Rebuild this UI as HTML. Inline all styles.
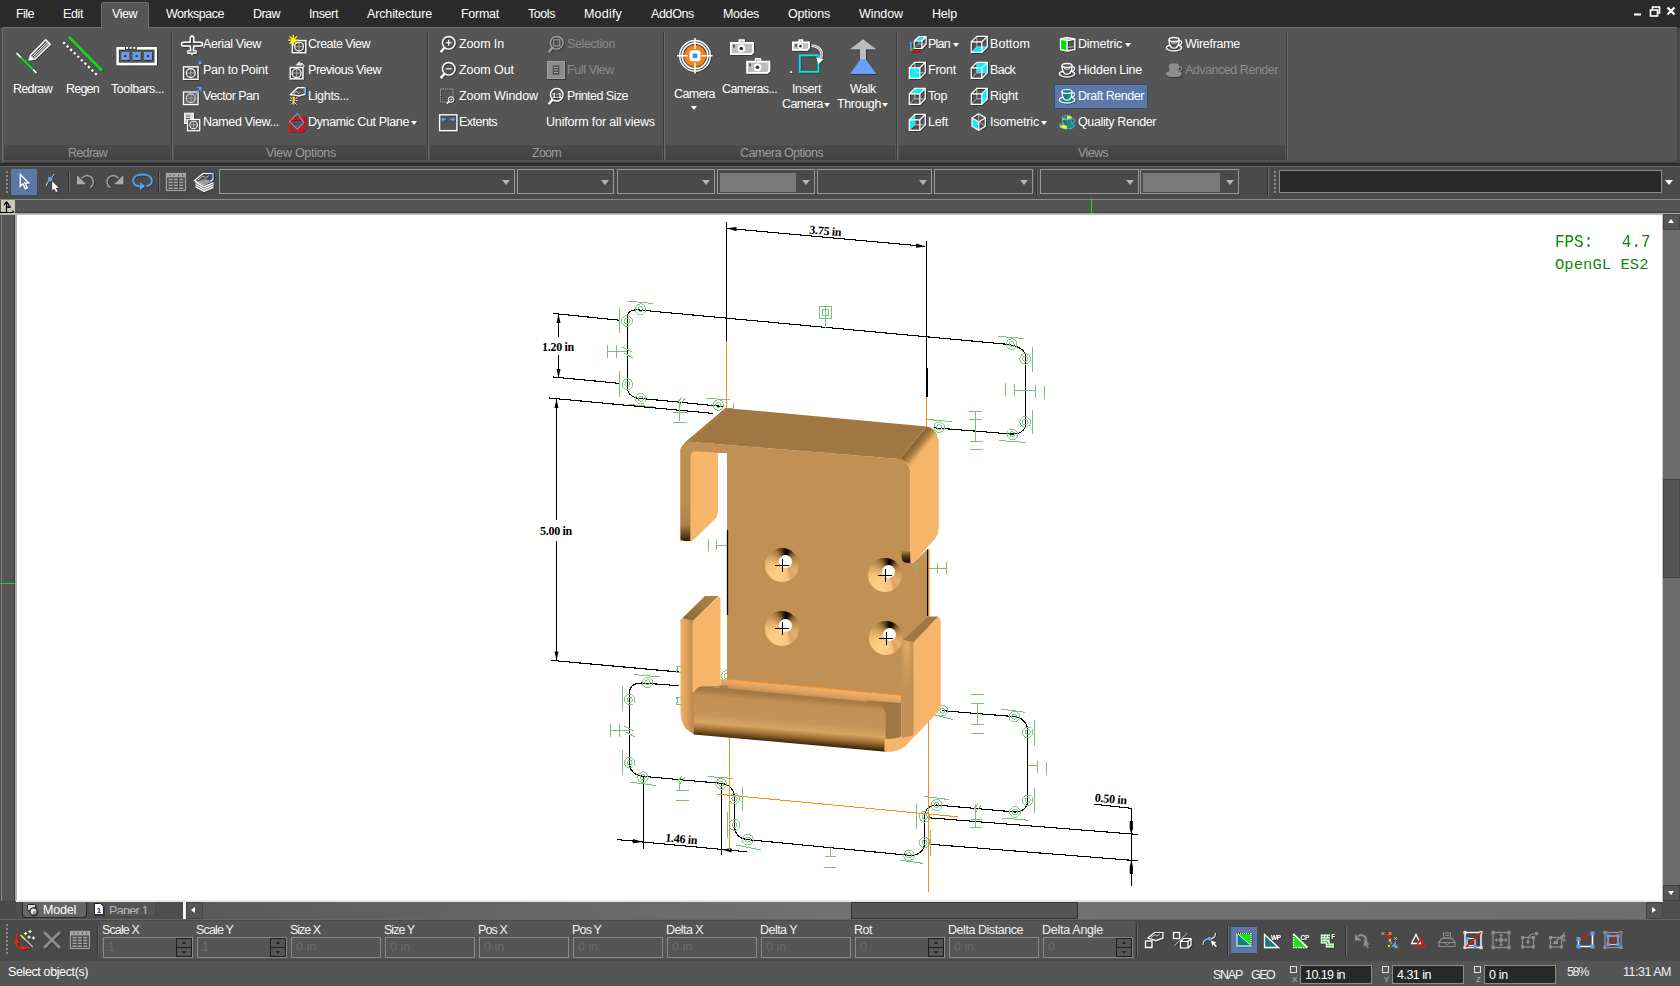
<!DOCTYPE html>
<html><head><meta charset="utf-8">
<style>
*{box-sizing:border-box;margin:0;padding:0}
html,body{width:1680px;height:986px;overflow:hidden;background:#4a4a4a;font-family:"Liberation Sans",sans-serif;font-size:12px;color:#fff}
.abs{position:absolute}
#menubar{left:0;top:0;width:1680px;height:28px;background:#2b2b2b}
.t{position:absolute;white-space:nowrap;line-height:1.15}
#viewtab{left:101px;top:2px;width:48px;height:27px;background:#555;border:1px solid #727272;border-bottom:none;border-radius:3px 3px 0 0}
#ribbon{left:2px;top:27px;width:1676px;height:136px;background:#555;border:1px solid #6e6e6e;border-bottom-color:#3a3a3a;border-right-color:#444;border-radius:2px}
.grp{position:absolute;top:145px;height:15px;background:linear-gradient(#4b4b4b,#424242);color:#9a9a9a;font-size:12px;text-align:center;line-height:15px}
.gsep{position:absolute;top:32px;height:128px;width:2px;background:linear-gradient(90deg,#3a3a3a 50%,#6c6c6c 50%)}
.rt{position:absolute;font-size:12.5px;white-space:nowrap;color:#fff;letter-spacing:-0.15px}
.dis{color:#8e8e8e}
.ic{position:absolute}
#tb{left:0;top:166px;width:1680px;height:32px;background:#4a4a4a;border-top:1px solid #6a6a6a}
.combo{position:absolute;top:169px;height:25px;border:1px solid #9a9a9a;background:#4a4a4a}
.combo:after{content:"";position:absolute;right:4px;top:10px;border:4px solid transparent;border-top:5px solid #b4b4b4;border-bottom:none}
.combo.g:before{content:"";position:absolute;left:2px;top:3px;bottom:1px;right:18px;background:#7a7a7a}
#rulerrow{left:0;top:199px;width:1680px;height:16px;background:#555;border-top:1px solid #8a8a8a;border-bottom:2px solid #b4b4b4}#rulerrow:after{content:"";position:absolute;left:0;right:0;bottom:0;height:1px;background:#3c3c3c}
#canvas{left:16px;top:215px;width:1647px;height:686px;background:#fff}
#vsb{left:1663px;top:215px;width:17px;height:686px;background:#6c6c6c}
#tabrow{left:0;top:901px;width:1680px;height:18px;background:#6a6a6a}
#insp{left:0;top:919px;width:1680px;height:42px;background:#4a4a4a;border-top:1px solid #666}
#status{left:0;top:961px;width:1680px;height:25px;background:#555}
.fl{position:absolute;top:923px;font-size:12.5px;color:#f0f0f0;white-space:nowrap;letter-spacing:-0.15px}
.fb{position:absolute;top:937px;height:21px;border:1px solid #8a8a8a;background:#555;color:#6c6c6c;font-size:12.5px;line-height:18px;padding-left:4px}
</style></head><body>
<div id="menubar" class="abs"></div>
<div id="ribbon" class="abs"></div>
<div id="viewtab" class="abs"></div>
<div class="t" style="left:16.0px;top:6.6px;font-size:12.5px;letter-spacing:-0.54px;color:#fff;">File</div><div class="t" style="left:63.0px;top:6.6px;font-size:12.5px;letter-spacing:-0.38px;color:#fff;">Edit</div><div class="t" style="left:112.0px;top:6.6px;font-size:12.5px;letter-spacing:-0.47px;color:#fff;">View</div><div class="t" style="left:166.0px;top:6.6px;font-size:12.5px;letter-spacing:-0.48px;color:#fff;">Workspace</div><div class="t" style="left:253.0px;top:6.6px;font-size:12.5px;letter-spacing:-0.54px;color:#fff;">Draw</div><div class="t" style="left:309.0px;top:6.6px;font-size:12.5px;letter-spacing:-0.38px;color:#fff;">Insert</div><div class="t" style="left:367.0px;top:6.6px;font-size:12.5px;letter-spacing:-0.14px;color:#fff;">Architecture</div><div class="t" style="left:461.0px;top:6.6px;font-size:12.5px;letter-spacing:-0.27px;color:#fff;">Format</div><div class="t" style="left:528.0px;top:6.6px;font-size:12.5px;letter-spacing:-0.44px;color:#fff;">Tools</div><div class="t" style="left:584.0px;top:6.6px;font-size:12.5px;letter-spacing:0.20px;color:#fff;">Modify</div><div class="t" style="left:651.0px;top:6.6px;font-size:12.5px;letter-spacing:-0.36px;color:#fff;">AddOns</div><div class="t" style="left:723.0px;top:6.6px;font-size:12.5px;letter-spacing:-0.30px;color:#fff;">Modes</div><div class="t" style="left:788.0px;top:6.6px;font-size:12.5px;letter-spacing:-0.15px;color:#fff;">Options</div><div class="t" style="left:859.0px;top:6.6px;font-size:12.5px;letter-spacing:-0.08px;color:#fff;">Window</div><div class="t" style="left:932.0px;top:6.6px;font-size:12.5px;letter-spacing:-0.18px;color:#fff;">Help</div><svg class="abs" style="left:1630px;top:4px" width="50" height="18" viewBox="0 0 50 18">
<rect x="4" y="9.5" width="7" height="2" fill="#fff"/>
<rect x="22.5" y="3" width="7" height="6" fill="none" stroke="#fff" stroke-width="1.6"/><rect x="20.5" y="6" width="7" height="6" fill="#2b2b2b" stroke="#fff" stroke-width="1.6"/>
<path d="M37.5 3.5l7 7M44.5 3.5l-7 7" stroke="#fff" stroke-width="2.2"/></svg>
<div class="grp" style="left:4px;width:166px"></div><div class="t" style="left:68.0px;top:146.2px;font-size:12.5px;letter-spacing:-0.68px;color:#9c9c9c;">Redraw</div><div class="grp" style="left:174px;width:252px"></div><div class="t" style="left:266.0px;top:146.2px;font-size:12.5px;letter-spacing:-0.29px;color:#9c9c9c;">View Options</div><div class="grp" style="left:430px;width:232px"></div><div class="t" style="left:532.0px;top:146.2px;font-size:12.5px;letter-spacing:-0.74px;color:#9c9c9c;">Zoom</div><div class="grp" style="left:666px;width:229px"></div><div class="t" style="left:740.0px;top:146.2px;font-size:12.5px;letter-spacing:-0.57px;color:#9c9c9c;">Camera Options</div><div class="grp" style="left:899px;width:386px"></div><div class="t" style="left:1078.0px;top:146.2px;font-size:12.5px;letter-spacing:-0.62px;color:#9c9c9c;">Views</div><div class="gsep" style="left:171px"></div><div class="gsep" style="left:427px"></div><div class="gsep" style="left:663px"></div><div class="gsep" style="left:896px"></div><div class="gsep" style="left:1286px"></div><div class="abs" style="left:1053.5px;top:83.5px;width:94px;height:25px;background:#5b78a8;border:1px solid #3a4d72"></div><div class="t" style="left:13.0px;top:81.5px;font-size:12.5px;letter-spacing:-0.68px;color:#fff;">Redraw</div><div class="t" style="left:66.0px;top:81.5px;font-size:12.5px;letter-spacing:-0.77px;color:#fff;">Regen</div><div class="t" style="left:111.0px;top:81.5px;font-size:12.5px;letter-spacing:-0.42px;color:#fff;">Toolbars...</div><div class="t" style="left:203.0px;top:37.1px;font-size:12.5px;letter-spacing:-0.39px;color:#fff;">Aerial View</div><div class="t" style="left:203.0px;top:63.2px;font-size:12.5px;letter-spacing:-0.26px;color:#fff;">Pan to Point</div><div class="t" style="left:203.0px;top:89.2px;font-size:12.5px;letter-spacing:-0.52px;color:#fff;">Vector Pan</div><div class="t" style="left:203.0px;top:115.2px;font-size:12.5px;letter-spacing:-0.34px;color:#fff;">Named View...</div><div class="t" style="left:308.0px;top:37.1px;font-size:12.5px;letter-spacing:-0.53px;color:#fff;">Create View</div><div class="t" style="left:308.0px;top:63.2px;font-size:12.5px;letter-spacing:-0.46px;color:#fff;">Previous View</div><div class="t" style="left:308.0px;top:89.2px;font-size:12.5px;letter-spacing:-0.31px;color:#fff;">Lights...</div><div class="t" style="left:308.0px;top:115.2px;font-size:12.5px;letter-spacing:-0.35px;color:#fff;">Dynamic Cut Plane</div><div class="t" style="left:459.0px;top:37.1px;font-size:12.5px;letter-spacing:-0.12px;color:#fff;">Zoom In</div><div class="t" style="left:459.0px;top:63.2px;font-size:12.5px;letter-spacing:-0.07px;color:#fff;">Zoom Out</div><div class="t" style="left:459.0px;top:89.2px;font-size:12.5px;letter-spacing:-0.08px;color:#fff;">Zoom Window</div><div class="t" style="left:459.0px;top:115.2px;font-size:12.5px;letter-spacing:-0.53px;color:#fff;">Extents</div><div class="t" style="left:567.0px;top:89.2px;font-size:12.5px;letter-spacing:-0.53px;color:#fff;">Printed Size</div><div class="t" style="left:546.0px;top:115.2px;font-size:12.5px;letter-spacing:-0.17px;color:#fff;">Uniform for all views</div><div class="t" style="left:674.0px;top:86.5px;font-size:12.5px;letter-spacing:-0.58px;color:#fff;">Camera</div><div class="t" style="left:722.0px;top:81.5px;font-size:12.5px;letter-spacing:-0.61px;color:#fff;">Cameras...</div><div class="t" style="left:792.0px;top:81.5px;font-size:12.5px;letter-spacing:-0.38px;color:#fff;">Insert</div><div class="t" style="left:782.0px;top:96.5px;font-size:12.5px;letter-spacing:-0.58px;color:#fff;">Camera</div><div class="t" style="left:850.0px;top:81.5px;font-size:12.5px;letter-spacing:-0.33px;color:#fff;">Walk</div><div class="t" style="left:837.0px;top:96.5px;font-size:12.5px;letter-spacing:-0.37px;color:#fff;">Through</div><div class="t" style="left:928.0px;top:37.1px;font-size:12.5px;letter-spacing:-0.75px;color:#fff;">Plan</div><div class="t" style="left:928.0px;top:63.2px;font-size:12.5px;letter-spacing:-0.24px;color:#fff;">Front</div><div class="t" style="left:928.0px;top:89.2px;font-size:12.5px;letter-spacing:-0.39px;color:#fff;">Top</div><div class="t" style="left:928.0px;top:115.2px;font-size:12.5px;letter-spacing:-0.21px;color:#fff;">Left</div><div class="t" style="left:990.0px;top:37.1px;font-size:12.5px;letter-spacing:0.07px;color:#fff;">Bottom</div><div class="t" style="left:990.0px;top:63.2px;font-size:12.5px;letter-spacing:-0.70px;color:#fff;">Back</div><div class="t" style="left:990.0px;top:89.2px;font-size:12.5px;letter-spacing:-0.24px;color:#fff;">Right</div><div class="t" style="left:990.0px;top:115.2px;font-size:12.5px;letter-spacing:-0.19px;color:#fff;">Isometric</div><div class="t" style="left:1078.0px;top:37.1px;font-size:12.5px;letter-spacing:-0.23px;color:#fff;">Dimetric</div><div class="t" style="left:1078.0px;top:63.2px;font-size:12.5px;letter-spacing:-0.25px;color:#fff;">Hidden Line</div><div class="t" style="left:1078.0px;top:89.2px;font-size:12.5px;letter-spacing:-0.46px;color:#fff;">Draft Render</div><div class="t" style="left:1078.0px;top:115.2px;font-size:12.5px;letter-spacing:-0.38px;color:#fff;">Quality Render</div><div class="t" style="left:1185.0px;top:37.1px;font-size:12.5px;letter-spacing:-0.29px;color:#fff;">Wireframe</div><div class="t" style="left:567.0px;top:37.1px;font-size:12.5px;letter-spacing:-0.38px;color:#8c8c8c;">Selection</div><div class="t" style="left:567.0px;top:63.2px;font-size:12.5px;letter-spacing:-0.39px;color:#8c8c8c;">Full View</div><div class="t" style="left:1185.0px;top:63.2px;font-size:12.5px;letter-spacing:-0.47px;color:#8c8c8c;">Advanced Render</div><div class="abs" style="left:410.5px;top:121.0px;border:3.5px solid transparent;border-top:4px solid #fff;border-bottom:none"></div><div class="abs" style="left:690.5px;top:106.0px;border:3.5px solid transparent;border-top:4px solid #fff;border-bottom:none"></div><div class="abs" style="left:823.5px;top:103.0px;border:3.5px solid transparent;border-top:4px solid #fff;border-bottom:none"></div><div class="abs" style="left:881.5px;top:103.0px;border:3.5px solid transparent;border-top:4px solid #fff;border-bottom:none"></div><div class="abs" style="left:952.5px;top:43.0px;border:3.5px solid transparent;border-top:4px solid #fff;border-bottom:none"></div><div class="abs" style="left:1040.5px;top:121.0px;border:3.5px solid transparent;border-top:4px solid #fff;border-bottom:none"></div><div class="abs" style="left:1124.5px;top:43.0px;border:3.5px solid transparent;border-top:4px solid #fff;border-bottom:none"></div><svg class="abs" style="left:0;top:0" width="1680" height="166" viewBox="0 0 1680 166" fill="none" stroke-linecap="butt"><defs><filter id="sh" x="-20%" y="-20%" width="150%" height="150%"><feDropShadow dx="0.7" dy="0.7" stdDeviation="0.5" flood-color="#000" flood-opacity="0.55"/></filter></defs><g filter="url(#sh)"><path d="M16.5 53L21 57.5M33 69.5L36.5 72.8" stroke="#fff" stroke-width="1.6"/><path d="M21 57.5L33 69.5" stroke="#10e010" stroke-width="2"/><path d="M29.3 59.8L30.6 55.2L45.8 39.8L50.2 44.2L35 59.2Z" stroke="#fff" stroke-width="1.4" fill="none"/><path d="M32.6 56.3L47.6 41.6M33.6 57.8L48.6 43" stroke="#fff" stroke-width="1"/><path d="M29.3 59.8L30.4 55.6L34.4 59Z" fill="#fff"/><path d="M69 36.8L102 70.6" stroke="#10e010" stroke-width="2.6"/><path d="M63.2 42.2L97 75" stroke="#fff" stroke-width="2.2" stroke-dasharray="2.2 2.75"/><path d="M125 48.2H117.6V64H155.8V48.2H137" stroke="#fff" stroke-width="2.4"/><path d="M126 47.8H136" stroke="#fff" stroke-width="1.8" stroke-dasharray="2 1.6"/><rect x="121.3" y="52" width="8" height="8" fill="#6a9cec"/><rect x="124.3" y="55" width="2" height="2" fill="#333"/><rect x="132.6" y="52" width="8" height="8" fill="#6a9cec"/><rect x="135.6" y="55" width="2" height="2" fill="#333"/><rect x="144" y="52" width="8" height="8" fill="#6a9cec"/><rect x="147" y="55" width="2" height="2" fill="#333"/><path d="M192 36c1.2 0 1.8 1 1.8 2.4v3.8h6.4c1.6 0 2.4 .8 2.4 1.9s-.8 1.9-2.4 1.9h-6.4l-.5 4.6h1.6c1 0 1.5 .6 1.5 1.3s-.5 1.3-1.5 1.3h-2l-.9 1.2l-.9-1.2h-2c-1 0-1.5-.6-1.5-1.3s.5-1.3 1.5-1.3h1.600l-.5-4.600h-6.400c-1.600 0-2.400-.8-2.400-1.900s.8-1.900 2.400-1.900h6.400v-3.800c0-1.400.6-2.400 1.800-2.400z" stroke="#fff" stroke-width="1.4"/><rect x="183.5" y="66.8" width="14.5" height="12.5" stroke="#fff" stroke-width="1.3"/><circle cx="190.75" cy="73.05" r="4.4" stroke="#fff" stroke-width="1.1"/><path d="M190.75 69.05V77.05M186.75 73.05H194.75" stroke="#b8b8b8" stroke-width="0.8"/><path d="M200 60.7l2 2.200l-2 2.200l-2-2.200z" fill="#6a9cec"/><rect x="183.5" y="92" width="14.5" height="12.5" stroke="#fff" stroke-width="1.3"/><circle cx="190.75" cy="98.25" r="4.4" stroke="#fff" stroke-width="1.1"/><path d="M190.75 94.25V102.25M186.75 98.25H194.75" stroke="#b8b8b8" stroke-width="0.8"/><rect x="184" y="92.5" width="13.500" height="11.500" fill="#888" opacity=".35"/><path d="M194 97L200.500 88M196.800 87.700l4.200-.4l-.3 4.200" stroke="#6a9cec" stroke-width="1.2"/><rect x="184.500" y="113.200" width="9" height="10.300" fill="#ddd" stroke="#fff" stroke-width="1"/><path d="M186 116h4M186 118.500h4M186 121h4" stroke="#555" stroke-width="1"/><rect x="187.500" y="119.500" width="12.200" height="11.200" fill="#555" stroke="#fff" stroke-width="1.2"/><circle cx="193.600" cy="125" r="3.900" stroke="#fff" stroke-width="1"/><path d="M193.600 121.500v7M190 125h7" stroke="#b8b8b8" stroke-width=".8"/><rect x="184.500" y="113.200" width="6" height="7" fill="#ddd"/><path d="M186 116h4M186 118.500h4" stroke="#555" stroke-width="1"/><rect x="292.3" y="40.5" width="13.5" height="12.2" stroke="#fff" stroke-width="1.3"/><circle cx="299.05" cy="46.6" r="4.4" stroke="#fff" stroke-width="1.1"/><path d="M299.05 42.6V50.6M295.05 46.6H303.05" stroke="#b8b8b8" stroke-width="0.8"/><path d="M293.300 34.800v10.600M288 40.100h10.600M289.600 36.400l7.400 7.400M297 36.400l-7.400 7.400" stroke="#ffff20" stroke-width="1.3"/><rect x="290.2" y="67.5" width="12.8" height="11.3" stroke="#fff" stroke-width="1.3"/><circle cx="296.59999999999997" cy="73.15" r="4.4" stroke="#fff" stroke-width="1.1"/><path d="M296.59999999999997 69.15V77.15M292.59999999999997 73.15H300.59999999999997" stroke="#b8b8b8" stroke-width="0.8"/><path d="M295.500 65.500l3.800-4l3.400 4z" fill="#e8e8e8"/><path d="M301 63.500c2.200.2 3 1.300 3 3.500" stroke="#fff" stroke-width="1"/><path d="M290.500 94.500l7-6.800h7.500v6.500l-6 1.600z" stroke="#fff" stroke-width="1.200"/><path d="M293.500 94l2.800-2.600l2.300 2l2-1.600" stroke="#ccc" stroke-width=".9"/><rect x="303.700" y="87.500" width="1.800" height="6.600" fill="#6a9cec"/><path d="M293.700 96.800v5.200" stroke="#ffd820" stroke-width="2.200"/><path d="M290 97.500l2 1.200M297.500 97.500l-2 1.200M289.600 100.500h2.200M295.800 100.500h2.200M291 104.500l2.300-2.300M296.500 104.500l-2.300-2.300M293.700 102v2.800" stroke="#eee" stroke-width=".9"/><path d="M293 116.700h12.600v11.400M289.800 119.200l3.200-2.500M302.600 119.200l3-2.500M302.600 130.700l3-2.600M293 116.700v11.400h12.600" stroke="#f01010" stroke-width="1.100"/><path d="M289.800 119.200h12.800v11.500h-12.800z" stroke="#f01010" stroke-width="1.700"/><path d="M297.300 113.700l6.500 8.700l-6.500 6.800l-7.800-7.800z" stroke="#6a9cec" stroke-width="1.100"/><circle cx="448.7" cy="42.8" r="6.300" stroke="#fff" stroke-width="1.400"/><path d="M444.4 47.8L440.7 52.099999999999994" stroke="#fff" stroke-width="2.400"/><path d="M445.700 42.800h6M448.700 39.800v6" stroke="#fff" stroke-width="1.100"/><circle cx="448.7" cy="68.8" r="6.300" stroke="#fff" stroke-width="1.400"/><path d="M444.4 73.8L440.7 78.1" stroke="#fff" stroke-width="2.400"/><path d="M445.700 68.800h6" stroke="#fff" stroke-width="1.100"/><rect x="440.500" y="89" width="12.500" height="13" stroke="#c4c4c4" stroke-width=".8" stroke-dasharray="1.200 1"/><circle cx="451" cy="99.500" r="2.800" stroke="#fff" stroke-width="1" fill="#555"/><path d="M448.900 101.600l-2 2.200" stroke="#fff" stroke-width="1.300"/><path d="M451 98v3M449.500 99.500h3" stroke="#ddd" stroke-width=".6"/><rect x="439.600" y="114.800" width="17.300" height="15.800" stroke="#fff" stroke-width="1.300"/><path d="M441 119.500l2.600-2.400v1.600h2.400v1.600h-2.400v1.600zM455.200 119.500l-2.600-2.400v1.600h-2.400v1.600h2.400v1.600z" fill="#6a9cec"/><circle cx="556.7" cy="42.8" r="6.300" stroke="#9a9a9a" stroke-width="1.400"/><path d="M552.4000000000001 47.8L548.7 52.099999999999994" stroke="#9a9a9a" stroke-width="2.400"/><rect x="553.700" y="39.800" width="6" height="6" stroke="#9a9a9a" stroke-width="1"/><rect x="547" y="61" width="18" height="18" fill="#8c8c8c"/><rect x="547.500" y="61.500" width="17" height="17" stroke="#a2a2a2" stroke-width="1"/><rect x="552.800" y="65.300" width="6.500" height="9.500" fill="#505050"/><path d="M554 67.500h4M554 70h4M554 72.500h4" stroke="#aaa" stroke-width="1"/><circle cx="556.7" cy="94.7" r="6.300" stroke="#fff" stroke-width="1.400"/><path d="M552.4000000000001 99.7L548.7 104.0" stroke="#fff" stroke-width="2.400"/><text x="556.700" y="97.700" font-family="Liberation Sans" font-weight="bold" font-size="7.500" fill="#fff" text-anchor="middle" stroke="none" letter-spacing="-.5">1:1</text><circle cx="695" cy="55.800" r="15.300" stroke="#fff" stroke-width="1.300"/><circle cx="695" cy="55.800" r="12.800" stroke="#fff" stroke-width="1.500"/><circle cx="695" cy="55.800" r="10.800" fill="#f58218"/><rect x="689.500" y="50.300" width="11" height="11" rx="2.500" fill="#fff"/><rect x="692.700" y="53.500" width="4.600" height="4.600" fill="#1e9bff"/><path d="M695 38v11M695 62.500v11M677 55.800h11M701.500 55.800h11" stroke="#fff" stroke-width="1.500"/><path d="M730 42.0H738.64V39.3h6.24V42.0H754V52.5L751.5 55.0H730Z" fill="#fff"/><path d="M731.8 43.8H752.2V51.8L750.8 53.2H731.8Z" fill="#bebebe"/><rect x="740.04" y="40.599999999999994" width="3.4400000000000004" height="1.800" fill="#bebebe"/><circle cx="741.28" cy="48.5" r="3.9" fill="#fff"/><circle cx="741.28" cy="48.5" r="1.8200000000000003" fill="#333"/><rect x="733" y="44.6" width="1.800" height="3" fill="#555"/><path d="M746.2 60.800000000000004H754.84V58.1h6.24V60.800000000000004H770.2V71.3L767.7 73.8H746.2Z" fill="#fff"/><path d="M748.0 62.6H768.4000000000001V70.6L767.0 72.0H748.0Z" fill="#bebebe"/><rect x="756.24" y="59.4" width="3.4400000000000004" height="1.800" fill="#bebebe"/><circle cx="757.48" cy="67.30000000000001" r="3.9" fill="#fff"/><circle cx="757.48" cy="67.30000000000001" r="1.8200000000000003" fill="#333"/><rect x="749.2" y="63.400000000000006" width="1.800" height="3" fill="#555"/><path d="M792 41.5H798.48V39.3h4.68V41.5H810V48.3L807.5 50.8H792Z" fill="#fff"/><path d="M793.8 43.3H808.2V47.599999999999994L806.8 49.0H793.8Z" fill="#bebebe"/><rect x="799.88" y="40.599999999999994" width="1.88" height="1.800" fill="#bebebe"/><circle cx="800.46" cy="46.15" r="2.79" fill="#fff"/><circle cx="800.46" cy="46.15" r="1.3020000000000003" fill="#333"/><rect x="795" y="44.1" width="1.800" height="3" fill="#555"/><rect x="799.800" y="55.300" width="18.600" height="16.500" stroke="#00e8ee" stroke-width="1.700"/><rect x="790.300" y="71.200" width="1.800" height="1.800" fill="#fff"/><path d="M811.500 45.700c8 .3 12 5.500 9.200 12.600" stroke="#fff" stroke-width="2.600"/><path d="M811.500 45.700c8 .3 12 5.500 9.200 12.600" stroke="#666" stroke-width=".8"/><path d="M816.200 57.300l7.300 2l-5.200 4.700z" fill="#fff"/><path d="M863 39.300L876.200 49.200H866V59.700H860V49.200H850z" fill="#bdbdbd"/><path d="M860 59.700h6L876.500 74H850z" fill="#6aa0f5"/><polygon points="909.3,67.8 919.8,67.8 919.8,78.3 909.3,78.3" fill="#00f0ff"/><path d="M914.8 62.3v10.500h10.500M909.3 78.3l5.500-5.500" stroke="#c8c8c8" stroke-width=".8"/><path d="M909.3 67.8h10.500v10.500h-10.500zM909.3 67.8l5.500-5.500h10.500v10.500l-5.500 5.500M919.8 67.8l5.500-5.500" stroke="#fff" stroke-width="1.200"/><polygon points="909.3,93.8 914.8,88.3 925.3,88.3 919.8,93.8" fill="#00f0ff"/><path d="M914.8 88.3v10.500h10.500M909.3 104.3l5.500-5.500" stroke="#c8c8c8" stroke-width=".8"/><path d="M909.3 93.8h10.500v10.500h-10.500zM909.3 93.8l5.500-5.500h10.500v10.500l-5.500 5.500M919.8 93.8l5.500-5.500" stroke="#fff" stroke-width="1.200"/><polygon points="909.3,119.8 914.8,114.3 914.8,124.8 909.3,130.3" fill="#00f0ff"/><path d="M914.8 114.3v10.500h10.500M909.3 130.3l5.500-5.500" stroke="#c8c8c8" stroke-width=".8"/><path d="M909.3 119.8h10.500v10.500h-10.500zM909.3 119.8l5.500-5.500h10.500v10.500l-5.500 5.500M919.8 119.8l5.500-5.500" stroke="#fff" stroke-width="1.200"/><polygon points="971.3,52.3 976.8,46.8 987.3,46.8 981.8,52.3" fill="#00f0ff"/><path d="M976.8 36.3v10.500h10.500M971.3 52.3l5.500-5.500" stroke="#c8c8c8" stroke-width=".8"/><path d="M971.3 41.8h10.500v10.500h-10.500zM971.3 41.8l5.500-5.500h10.500v10.500l-5.500 5.500M981.8 41.8l5.500-5.500" stroke="#fff" stroke-width="1.200"/><polygon points="976.8,62.3 987.3,62.3 987.3,72.8 976.8,72.8" fill="#00f0ff"/><path d="M976.8 62.3v10.500h10.500M971.3 78.3l5.500-5.500" stroke="#c8c8c8" stroke-width=".8"/><path d="M971.3 67.8h10.500v10.500h-10.500zM971.3 67.8l5.500-5.500h10.500v10.500l-5.500 5.500M981.8 67.8l5.500-5.500" stroke="#fff" stroke-width="1.200"/><polygon points="981.8,93.8 987.3,88.3 987.3,98.8 981.8,104.3" fill="#00f0ff"/><path d="M976.8 88.3v10.500h10.500M971.3 104.3l5.500-5.500" stroke="#c8c8c8" stroke-width=".8"/><path d="M971.3 93.8h10.500v10.500h-10.500zM971.3 93.8l5.500-5.500h10.500v10.500l-5.500 5.500M981.8 93.8l5.500-5.500" stroke="#fff" stroke-width="1.200"/><polygon points="914.3,41.0 918.8,36.5 925.8,36.5 921.8,41.0" fill="#00f0ff"/><path d="M914.3 41.0h7.500v7.500h-7.500zM914.3 41.0l4.500-4.500h7.300v7.500l-4.300 4.500M921.8 41.0l4.300-4.500" stroke="#fff" stroke-width="1.100"/><path d="M918.8 36.5v7.500h7M914.3 48.5l4.500-4.500" stroke="#bbb" stroke-width=".7"/><path d="M910.800 43v8" stroke="#6a9cec" stroke-width="1.600"/><path d="M909.300 42.800h3.200" stroke="#6a9cec" stroke-width="1.200"/><path d="M910.800 50.800h9.500" stroke="#f01010" stroke-width="1.600"/><path d="M911 50.500l3.500-3.800" stroke="#10d010" stroke-width="1.200"/><polygon points="978.7,122 978.7,130.3 972.0151499081879,126.15 972.0151499081879,117.85" fill="#00f0ff"/><polygon points="978.7,113.7 985.4,117.8 985.4,126.2 978.7,130.3 972.0,126.2 972.0,117.8" stroke="#fff" stroke-width="1.200"/><path d="M978.7 122L985.3848500918122 117.85M978.7 122L978.7 130.3M978.7 122L972.0151499081879 117.85" stroke="#fff" stroke-width="1.100"/><path d="M978.7 122L978.7 113.7M978.7 122L985.3848500918122 126.15M978.7 122L972.0151499081879 126.15" stroke="#ccc" stroke-width=".7"/><polygon points="1060.800,39.200 1067,37.800 1067,50.500 1060.800,49.300" fill="#00e000"/><path d="M1060.500 39l6.500-1.500l7.800 1.500v10.500l-7.800 1.500l-6.500-1.500zM1067 37.500v13.500M1060.500 39l7 1.500l7.300-1.500" stroke="#fff" stroke-width="1.300"/><path d="M1067.500 47.500l7-1" stroke="#ccc" stroke-width=".8"/><ellipse cx="1067.0" cy="73.8" rx="7.700" ry="3.100" stroke="#fff" stroke-width="1.300"/><path d="M1062.0 65.5c0 4 1 6.500 2.500 8c1.500.8 3.500.8 5 0c1.500-1.500 2.500-4 2.500-8" stroke="#fff" stroke-width="1.300" fill="#555"/><ellipse cx="1067.0" cy="65.5" rx="5" ry="2" stroke="#fff" stroke-width="1.300" fill="#555"/><path d="M1072.0 66.8c2.500-.5 3 1 2.500 2.500c-.5 1.200-2 2-3.300 2.200" stroke="#fff" stroke-width="1.100"/><path d="M1064.0 68.3c2 1.200 4 1.200 6 0" stroke="#fff" stroke-width=".8"/><ellipse cx="1174.0" cy="47.8" rx="7.700" ry="3.100" stroke="#fff" stroke-width="1.300"/><path d="M1169.0 39.5c0 4 1 6.500 2.500 8c1.500.8 3.500.8 5 0c1.500-1.500 2.500-4 2.500-8" stroke="#fff" stroke-width="1.300" fill="#555"/><ellipse cx="1174.0" cy="39.5" rx="5" ry="2" stroke="#fff" stroke-width="1.300" fill="#555"/><path d="M1179.0 40.8c2.500-.5 3 1 2.500 2.500c-.5 1.200-2 2-3.300 2.200" stroke="#fff" stroke-width="1.100"/><path d="M1171.0 42.3c2 1.200 4 1.200 6 0" stroke="#fff" stroke-width=".8"/><ellipse cx="1174.0" cy="73.8" rx="8" ry="3.300" fill="#8e8e8e"/><path d="M1169.0 65.3h10c0 4-1 7-2.500 8.500h-5c-1.500-1.500-2.500-4.500-2.500-8.500z" fill="#8e8e8e"/><ellipse cx="1174.0" cy="65.3" rx="5" ry="2" fill="#8e8e8e"/><path d="M1179.0 66.8c2.500-.5 3 1 2.500 2.500c-.5 1.200-2 2-3.300 2.200" stroke="#8e8e8e" stroke-width="1.200"/></g><g filter="url(#sh)"><ellipse cx="1067.0" cy="99.8" rx="7.700" ry="3.100" fill="#108888" stroke="#fff" stroke-width="1.200"/><path d="M1062.0 91.5c0 4 1 6.500 2.500 8c1.500.8 3.500.8 5 0c1.500-1.500 2.500-4 2.500-8z" fill="#3a6a90"/><path d="M1067.0 91.8l5-.3c0 4-1 6.500-2.500 8c-.8.400-1.700.6-2.500.6z" fill="#109090"/><ellipse cx="1067.0" cy="91.5" rx="5" ry="2" fill="#109090" stroke="#fff" stroke-width="1.200"/><path d="M1062.0 91.5c0 4 1 6.500 2.500 8c1.500.8 3.500.8 5 0c1.500-1.500 2.500-4 2.500-8" stroke="#fff" stroke-width="1.200" fill="none"/><path d="M1072.0 92.8c2.500-.5 3 1 2.500 2.500c-.5 1.200-2 2-3.300 2.200" stroke="#fff" stroke-width="1.100" fill="none"/></g><g><ellipse cx="1067.0" cy="125.8" rx="7.700" ry="3.100" fill="#109088" stroke="#5aa0f0" stroke-width="1"/><path d="M1060.0 125.8a7.700 3.100 0 0 0 7 3.100v-5z" fill="#f8f020"/><path d="M1062.0 117.5c0 4 1 6.500 2.500 8c1.500.8 3.500.8 5 0c1.500-1.500 2.500-4 2.500-8z" fill="#f8f020"/><path d="M1067.0 117.8l5-.3c0 4-1 6.500-2.500 8c-.8.400-1.700.6-2.500.6z" fill="#109088"/><path d="M1062.4 119.8l4.600 .5v5.800c-2-.3-4-2-4.600-6.300z" fill="#2a6aa0"/><ellipse cx="1067.0" cy="117.5" rx="5" ry="2" fill="#f8f020" stroke="#5aa0f0" stroke-width="1"/><path d="M1062.0 117.5a5 2 0 0 1 5-2v4z" fill="#109088"/><path d="M1072.0 118.8c2.500-.5 3 1 2.500 2.500c-.5 1.200-2 2-3.300 2.200" stroke="#5aa0f0" stroke-width="1.100" fill="none"/></g></svg>
<div class="abs" style="left:0;top:163px;width:1680px;height:3px;background:#2e2e2e"></div><div id="tb" class="abs"></div>
<div class="combo" style="left:219px;width:296px"></div><div class="combo" style="left:517px;width:97px"></div><div class="combo" style="left:617px;width:98px"></div><div class="combo g" style="left:717px;width:98px"></div><div class="combo" style="left:817px;width:115px"></div><div class="combo" style="left:934px;width:99px"></div><div class="combo" style="left:1040px;width:99px"></div><div class="combo g" style="left:1140px;width:99px"></div><div class="abs" style="left:1036px;top:170px;width:2px;height:25px;background:linear-gradient(90deg,#2e2e2e 50%,#6e6e6e 50%)"></div><div class="abs" style="left:1267px;top:167px;width:2px;height:30px;background:linear-gradient(90deg,#2e2e2e 50%,#6e6e6e 50%)"></div><div class="abs" style="left:68px;top:171px;width:2px;height:21px;background:linear-gradient(90deg,#2e2e2e 50%,#6e6e6e 50%)"></div><div class="abs" style="left:158px;top:171px;width:2px;height:21px;background:linear-gradient(90deg,#2e2e2e 50%,#6e6e6e 50%)"></div><div class="abs" style="left:1279px;top:170px;width:383px;height:23px;background:#282828;border:1px solid #8c8c8c"></div><div class="abs" style="left:1665px;top:180px;border:4px solid transparent;border-top:5px solid #fff;border-bottom:none"></div><div class="abs" style="left:11px;top:169px;width:26px;height:26px;background:#5b78a8"></div><div class="abs" style="left:6px;top:171px;width:2px;height:2px;background:#8a8a8a"></div><div class="abs" style="left:6px;top:175px;width:2px;height:2px;background:#8a8a8a"></div><div class="abs" style="left:6px;top:179px;width:2px;height:2px;background:#8a8a8a"></div><div class="abs" style="left:6px;top:183px;width:2px;height:2px;background:#8a8a8a"></div><div class="abs" style="left:6px;top:187px;width:2px;height:2px;background:#8a8a8a"></div><div class="abs" style="left:6px;top:191px;width:2px;height:2px;background:#8a8a8a"></div><div class="abs" style="left:1274px;top:171px;width:2px;height:2px;background:#8a8a8a"></div><div class="abs" style="left:1274px;top:175px;width:2px;height:2px;background:#8a8a8a"></div><div class="abs" style="left:1274px;top:179px;width:2px;height:2px;background:#8a8a8a"></div><div class="abs" style="left:1274px;top:183px;width:2px;height:2px;background:#8a8a8a"></div><div class="abs" style="left:1274px;top:187px;width:2px;height:2px;background:#8a8a8a"></div><div class="abs" style="left:1274px;top:191px;width:2px;height:2px;background:#8a8a8a"></div><svg class="abs" style="left:0;top:166px" width="240" height="32" viewBox="0 166 240 32" fill="none"><defs><filter id="sh2" x="-20%" y="-20%" width="150%" height="150%"><feDropShadow dx="0.7" dy="0.7" stdDeviation="0.5" flood-color="#000" flood-opacity="0.5"/></filter></defs><g filter="url(#sh2)"><path d="M20.300 174.500V186.300L23 183.800L25.300 188.800L27.300 187.900L25 183L28.600 182.800Z" stroke="#fff" stroke-width="1.400" stroke-linejoin="miter" fill="#5b78a8"/><path d="M54 174C52 178 48 180 46 186" stroke="#ddd" stroke-width="1"/><rect x="48" y="177" width="4.200" height="4.200" fill="#5aa0f0"/><path d="M52.200 181.500V190.500L54.300 188.600L56 192L57.400 191.300L55.800 188L58.500 187.800Z" fill="#fff"/><path d="M77 175.300V184.300H86Z" fill="#a8a8a8"/><path d="M81.800 178.200A6.400 6.400 0 1 1 90 187.600" stroke="#a8a8a8" stroke-width="1.300"/><path d="M123.300 175.300V184.300H114.300Z" fill="#a8a8a8"/><path d="M118.500 178.200A6.400 6.400 0 1 0 110.300 187.600" stroke="#a8a8a8" stroke-width="1.300"/><path d="M146.500 186.200C150 185.500 151.800 183.500 151.800 180.700C151.800 177 148 174.500 142.500 174.500S133.200 177 133.200 180.700C133.200 183.800 136 186 140 186.600" stroke="#5aa0f0" stroke-width="1.800"/><path d="M140 182L145 186.200L140 190.300Z" fill="#5aa0f0"/><rect x="166.5" y="173.5" width="19" height="17" stroke="#a4a4a4" stroke-width="1.200"/><rect x="167" y="174" width="18" height="3.400" fill="#a4a4a4"/><rect x="168.5" y="178.8" width="4.200" height="1.500" fill="#a4a4a4"/><rect x="173.8" y="178.8" width="4.200" height="1.500" fill="#a4a4a4"/><rect x="179.1" y="178.8" width="4.200" height="1.500" fill="#a4a4a4"/><rect x="168.5" y="181.70000000000002" width="4.200" height="1.500" fill="#a4a4a4"/><rect x="173.8" y="181.70000000000002" width="4.200" height="1.500" fill="#a4a4a4"/><rect x="179.1" y="181.70000000000002" width="4.200" height="1.500" fill="#a4a4a4"/><rect x="168.5" y="184.60000000000002" width="4.200" height="1.500" fill="#a4a4a4"/><rect x="173.8" y="184.60000000000002" width="4.200" height="1.500" fill="#a4a4a4"/><rect x="179.1" y="184.60000000000002" width="4.200" height="1.500" fill="#a4a4a4"/><rect x="168.5" y="187.5" width="4.200" height="1.500" fill="#a4a4a4"/><rect x="173.8" y="187.5" width="4.200" height="1.500" fill="#a4a4a4"/><rect x="179.1" y="187.5" width="4.200" height="1.500" fill="#a4a4a4"/><rect x="169.5" y="174.6" width="1" height="1.400" fill="#4a4a4a"/><rect x="173.7" y="174.6" width="1" height="1.400" fill="#4a4a4a"/><rect x="177.9" y="174.6" width="1" height="1.400" fill="#4a4a4a"/><rect x="182.1" y="174.6" width="1" height="1.400" fill="#4a4a4a"/><path d="M194.500 180.500L203 173.500H212.500V180L204 184.500Z" stroke="#fff" stroke-width="1.200" fill="#4a4a4a"/><path d="M198 180L203 176L205.500 178L209 175.500" stroke="#ccc" stroke-width=".9"/><rect x="212" y="172.800" width="2" height="6.500" fill="#5aa0f0"/><path d="M195.500 181.5L204 186.0L213.500 182.0V183.5L204 187.5L195.500 183.0Z" fill="#fff"/><path d="M195.500 183.8L204 188.3L213.500 184.3V185.8L204 189.8L195.500 185.3Z" fill="#fff"/><path d="M195.500 186.1L204 190.6L213.500 186.6V188.1L204 192.1L195.500 187.6Z" fill="#fff"/><path d="M197 181.500L204 185L212 181.500L205 179Z" fill="#9a9a9a"/></g></svg>
<div id="rulerrow" class="abs"></div>
<div id="canvas" class="abs"></div>
<svg class="abs" style="left:17px;top:216px" width="1646" height="684" viewBox="17 216 1646 684" fill="none"><defs>
<linearGradient id="bev" gradientUnits="userSpaceOnUse" x1="913" y1="443" x2="923.5" y2="451.600"><stop offset="0" stop-color="#8a6030"/><stop offset=".3" stop-color="#94703a"/><stop offset=".55" stop-color="#b4864a"/><stop offset=".85" stop-color="#e8ac64"/><stop offset="1" stop-color="#f6b56b"/></linearGradient>
<linearGradient id="lbev" gradientUnits="userSpaceOnUse" x1="703" y1="422" x2="708" y2="427.500"><stop offset="0" stop-color="#cf9a5a"/><stop offset=".5" stop-color="#b4864a"/><stop offset="1" stop-color="#a07742"/></linearGradient>
<linearGradient id="lstrip" gradientUnits="userSpaceOnUse" x1="0" y1="500" x2="0" y2="541"><stop offset="0" stop-color="#be8f54"/><stop offset=".6" stop-color="#b08248"/><stop offset=".93" stop-color="#4a3010"/><stop offset="1" stop-color="#2a1a05"/></linearGradient>
<linearGradient id="lip" gradientUnits="userSpaceOnUse" x1="790" y1="694" x2="786" y2="743"><stop offset="0" stop-color="#a07742"/><stop offset=".07" stop-color="#a87c44"/><stop offset=".18" stop-color="#c09055"/><stop offset=".55" stop-color="#c59458"/><stop offset=".72" stop-color="#d8a462"/><stop offset=".86" stop-color="#9a6a30"/><stop offset="1" stop-color="#3a2408"/></linearGradient>
<linearGradient id="chan" gradientUnits="userSpaceOnUse" x1="800" y1="686" x2="798.500" y2="700"><stop offset="0" stop-color="#f2b168"/><stop offset=".4" stop-color="#dda25e"/><stop offset="1" stop-color="#a87c44"/></linearGradient>
<linearGradient id="ltop" gradientUnits="userSpaceOnUse" x1="686" y1="619" x2="714" y2="597"><stop offset="0" stop-color="#8e6834"/><stop offset=".5" stop-color="#a07742"/><stop offset="1" stop-color="#b08248"/></linearGradient><linearGradient id="ll" gradientUnits="userSpaceOnUse" x1="680" y1="0" x2="693" y2="0"><stop offset="0" stop-color="#f3b269"/><stop offset=".45" stop-color="#e0a25c"/><stop offset="1" stop-color="#b98a4e"/></linearGradient>
<linearGradient id="rl" gradientUnits="userSpaceOnUse" x1="901" y1="0" x2="913" y2="0"><stop offset="0" stop-color="#c89858"/><stop offset=".5" stop-color="#e8aa62"/><stop offset="1" stop-color="#c09055"/></linearGradient>
<linearGradient id="rl2" gradientUnits="userSpaceOnUse" x1="0" y1="646" x2="0" y2="690"><stop offset="0" stop-color="#c09055" stop-opacity="0"/><stop offset="1" stop-color="#c09055" stop-opacity="1"/></linearGradient>
<linearGradient id="shd" gradientUnits="userSpaceOnUse" x1="0" y1="551" x2="0" y2="563"><stop offset="0" stop-color="#b08248"/><stop offset=".45" stop-color="#5a3a14"/><stop offset="1" stop-color="#0a0500"/></linearGradient>
</defs><g shape-rendering="crispEdges"><path d="M627.500 388V316.500Q627.500 310.500 636 309.700L1004 344C1015 345 1025.500 348 1025.500 357V424C1025.500 431 1019 434.500 1011 434L932.800 427.700" stroke="#000" stroke-width="1.100"/><path d="M627.500 388Q627.600 395.500 636.500 398L723 406.500" stroke="#000" stroke-width="1.100"/><path d="M679 685.700L642.400 683Q630 683 629.700 692V765Q630.500 774.500 643.500 776.400L721.600 783.400C730 784.500 734.500 790 734.500 799V825C734.500 834 739 838.500 747.200 839.600L909 855.300C918 856 924.700 851 924.700 842.400V816.800C924.700 810 929 805.500 936.500 805L1015 812C1022 812 1027.700 808 1027.700 800.300V732.300C1027.700 723 1023 718 1014.300 716.600L942.400 710.700" stroke="#000" stroke-width="1.100"/><path d="M726.500 222V341M926.500 241V368.600" stroke="#000" stroke-width="1.100"/><path d="M927 368V397" stroke="#000" stroke-width="2"/><path d="M726.500 341V408M926.500 397V427" stroke="#ff8c1a" stroke-width="1"/><path d="M726 228.200L925.500 246.400" stroke="#000" stroke-width="1.100"/><path shape-rendering="auto" d="M726.500 228.200l10-1.300v4.400zM926 246.400l-10-3v4.400z" fill="#000"/><path d="M553 313.400L620 320.300M553 377L620 383.400M558.500 314V337M558.500 355V378" stroke="#000" stroke-width="1.100"/><path shape-rendering="auto" d="M558.500 314l-2 9h4zM558.500 378l-2-9h4z" fill="#000"/><path d="M549 398L713 413.400M556.500 399V520M556.500 541V660.500" stroke="#000" stroke-width="1.100"/><path shape-rendering="auto" d="M556.500 399l-2 9h4zM556.500 660.500l-2-9h4z" fill="#000"/><path d="M551.400 660.400L679 672" stroke="#000" stroke-width="1.100"/><path d="M643.500 777V848.500M721.500 784V855M617.400 839.600L747.200 851.800" stroke="#000" stroke-width="1.100"/><path shape-rendering="auto" d="M643.500 842.100l-10.500-3.200v4.400zM721.100 849.400l10.500-1.200v4.400z" fill="#000"/><path d="M1093.700 804.200L1130.200 808.200L1131.500 808.400V886M926.700 817.600L1138 834.500M930.600 844.300L1138 860.800" stroke="#000" stroke-width="1.100"/><path shape-rendering="auto" d="M1131.300 833.500l-1.600-4.500v-8h3.200v8zM1131.300 861l-1.600 5v8h3.200v-8z" fill="#000"/><path d="M729 736V850M928.600 720.500V891.500M716.500 794L958 816.800" stroke="#ff8c1a" stroke-width="1"/><text x="825" y="235" transform="rotate(5.2 825 235)" font-family="Liberation Serif" font-weight="bold" font-size="12" fill="#000" text-anchor="middle" letter-spacing="-.3">3.75 in</text><text x="558" y="350.5" transform="rotate(0 558 350.5)" font-family="Liberation Serif" font-weight="bold" font-size="12" fill="#000" text-anchor="middle" letter-spacing="-.3">1.20 in</text><text x="556" y="534.5" transform="rotate(0 556 534.5)" font-family="Liberation Serif" font-weight="bold" font-size="12" fill="#000" text-anchor="middle" letter-spacing="-.3">5.00 in</text><text x="681" y="843" transform="rotate(5.2 681 843)" font-family="Liberation Serif" font-weight="bold" font-size="12" fill="#000" text-anchor="middle" letter-spacing="-.3">1.46 in</text><text x="1110.5" y="803" transform="rotate(5.2 1110.5 803)" font-family="Liberation Serif" font-weight="bold" font-size="12" fill="#000" text-anchor="middle" letter-spacing="-.3">0.50 in</text><circle cx="627" cy="321" r="2.600" stroke="#74c378" stroke-width=".9"/><circle cx="627" cy="321" r="5.300" stroke="#74c378" stroke-width=".9"/><circle cx="640.5" cy="309.2" r="2.600" stroke="#74c378" stroke-width=".9"/><circle cx="640.5" cy="309.2" r="5.300" stroke="#74c378" stroke-width=".9"/><circle cx="627.5" cy="384.2" r="2.600" stroke="#74c378" stroke-width=".9"/><circle cx="627.5" cy="384.2" r="5.300" stroke="#74c378" stroke-width=".9"/><circle cx="640.7" cy="398.7" r="2.600" stroke="#74c378" stroke-width=".9"/><circle cx="640.7" cy="398.7" r="5.300" stroke="#74c378" stroke-width=".9"/><circle cx="1011.6" cy="344.1" r="2.600" stroke="#74c378" stroke-width=".9"/><circle cx="1011.6" cy="344.1" r="5.300" stroke="#74c378" stroke-width=".9"/><circle cx="1025.1" cy="358.8" r="2.600" stroke="#74c378" stroke-width=".9"/><circle cx="1025.1" cy="358.8" r="5.300" stroke="#74c378" stroke-width=".9"/><circle cx="1025.1" cy="422" r="2.600" stroke="#74c378" stroke-width=".9"/><circle cx="1025.1" cy="422" r="5.300" stroke="#74c378" stroke-width=".9"/><circle cx="1012.3" cy="434.3" r="2.600" stroke="#74c378" stroke-width=".9"/><circle cx="1012.3" cy="434.3" r="5.300" stroke="#74c378" stroke-width=".9"/><circle cx="718.4" cy="405" r="2.600" stroke="#74c378" stroke-width=".9"/><circle cx="718.4" cy="405" r="5.300" stroke="#74c378" stroke-width=".9"/><circle cx="939.2" cy="427.2" r="2.600" stroke="#74c378" stroke-width=".9"/><circle cx="939.2" cy="427.2" r="5.300" stroke="#74c378" stroke-width=".9"/><circle cx="647.5" cy="682.3" r="2.600" stroke="#74c378" stroke-width=".9"/><circle cx="647.5" cy="682.3" r="5.300" stroke="#74c378" stroke-width=".9"/><circle cx="629.7" cy="699.7" r="2.600" stroke="#74c378" stroke-width=".9"/><circle cx="629.7" cy="699.7" r="5.300" stroke="#74c378" stroke-width=".9"/><circle cx="629.7" cy="762.6" r="2.600" stroke="#74c378" stroke-width=".9"/><circle cx="629.7" cy="762.6" r="5.300" stroke="#74c378" stroke-width=".9"/><circle cx="642.8" cy="777.1" r="2.600" stroke="#74c378" stroke-width=".9"/><circle cx="642.8" cy="777.1" r="5.300" stroke="#74c378" stroke-width=".9"/><circle cx="721.1" cy="783.8" r="2.600" stroke="#74c378" stroke-width=".9"/><circle cx="721.1" cy="783.8" r="5.300" stroke="#74c378" stroke-width=".9"/><circle cx="734.5" cy="798.7" r="2.600" stroke="#74c378" stroke-width=".9"/><circle cx="734.5" cy="798.7" r="5.300" stroke="#74c378" stroke-width=".9"/><circle cx="734.5" cy="825" r="2.600" stroke="#74c378" stroke-width=".9"/><circle cx="734.5" cy="825" r="5.300" stroke="#74c378" stroke-width=".9"/><circle cx="747.9" cy="839.6" r="2.600" stroke="#74c378" stroke-width=".9"/><circle cx="747.9" cy="839.6" r="5.300" stroke="#74c378" stroke-width=".9"/><circle cx="909" cy="855.3" r="2.600" stroke="#74c378" stroke-width=".9"/><circle cx="909" cy="855.3" r="5.300" stroke="#74c378" stroke-width=".9"/><circle cx="924.7" cy="842.4" r="2.600" stroke="#74c378" stroke-width=".9"/><circle cx="924.7" cy="842.4" r="5.300" stroke="#74c378" stroke-width=".9"/><circle cx="924.7" cy="816.8" r="2.600" stroke="#74c378" stroke-width=".9"/><circle cx="924.7" cy="816.8" r="5.300" stroke="#74c378" stroke-width=".9"/><circle cx="936.5" cy="805" r="2.600" stroke="#74c378" stroke-width=".9"/><circle cx="936.5" cy="805" r="5.300" stroke="#74c378" stroke-width=".9"/><circle cx="1015" cy="812" r="2.600" stroke="#74c378" stroke-width=".9"/><circle cx="1015" cy="812" r="5.300" stroke="#74c378" stroke-width=".9"/><circle cx="1027.7" cy="800.3" r="2.600" stroke="#74c378" stroke-width=".9"/><circle cx="1027.7" cy="800.3" r="5.300" stroke="#74c378" stroke-width=".9"/><circle cx="1027.7" cy="732.3" r="2.600" stroke="#74c378" stroke-width=".9"/><circle cx="1027.7" cy="732.3" r="5.300" stroke="#74c378" stroke-width=".9"/><circle cx="1014.3" cy="716.6" r="2.600" stroke="#74c378" stroke-width=".9"/><circle cx="1014.3" cy="716.6" r="5.300" stroke="#74c378" stroke-width=".9"/><circle cx="942.4" cy="710.7" r="2.600" stroke="#74c378" stroke-width=".9"/><circle cx="942.4" cy="710.7" r="5.300" stroke="#74c378" stroke-width=".9"/><circle cx="726.7" cy="676" r="2.600" stroke="#74c378" stroke-width=".9"/><circle cx="726.7" cy="676" r="5.300" stroke="#74c378" stroke-width=".9"/><path d="M619.900 308V332.600M627.200 301L652.800 303.500M619.900 371V396.500M628 404.300L653.500 406.800M998 336.300L1023.700 338.500M1032.200 347V371.800M1032.200 410.200V434.300M998.800 440.500L1025.800 442.400M926.400 419.400L952 421.600M706 398.200L730 400M733.500 403V408" stroke="#74c378" stroke-width="1"/><path d="M607.400 351H627M607.400 345.400V357.500M616.600 345.400V357.500M622 347l10 5M624 353l9 5" stroke="#74c378" stroke-width="1"/><path d="M1005.500 383.200V396M1014.500 390.600H1035.800M1014.500 384V396M1035.800 385.300V398M1044.700 386V399" stroke="#74c378" stroke-width="1"/><path d="M677 403l5-6M680 404.500l5-6M679.800 402V421.400M673 412h14M673 422h14" stroke="#74c378" stroke-width="1"/><path d="M969 411h13M975.700 411v30.400M969 419.400h13M970 441.400h13M970 449.700h13" stroke="#74c378" stroke-width="1"/><path d="M819 306h12v12h-12zM822 309h6v6h-6zM825 306v22" stroke="#74c378" stroke-width="1"/><path d="M708 539V551M716 545H727M716 540V550" stroke="#74c378" stroke-width="1"/><path d="M916 568H946M916 563V573M937 563V573M946 562V574" stroke="#74c378" stroke-width="1"/><path d="M610 730.300H629.700M610 724V736.500M619 724V736.500M624 726l10 5M626 732l9 5" stroke="#74c378" stroke-width="1"/><path d="M622.500 686V711M634 674.500L660 677M622.500 750V775M630 782L656 785.500M1001 709L1025.500 712.300M1034.500 719.800V745.700M1034.500 787.900V813.400M1002 818L1027.700 820.200M742 787V811M727.500 812V838M736 845L761 850M900 860.200L923.400 863.400M708 776.500L733 778.500M924.500 796.400L949 799.600M916.600 803.800V829.400M930.900 830.400V856M935 715L953 719.400" stroke="#74c378" stroke-width="1"/><path d="M677 782l5-6M680 783.500l5-6M679.800 781V790M676 790.500h13M676 800.500h13" stroke="#74c378" stroke-width="1"/><path d="M971 694.700h12.600M971 703.800h12.600M977.200 703.800V724M971 724h12.600M971 733.600h13" stroke="#74c378" stroke-width="1"/><path d="M1028 765.500H1037.200M1037.200 761.300V773.400M1046.400 762V774.700" stroke="#74c378" stroke-width="1"/><path d="M830.400 846v10M825 856h11M824 867h12" stroke="#74c378" stroke-width="1"/><path d="M973 810l5-6M976 811.500l5-6M975.500 804V827M970 819h12M970 827.900h12" stroke="#74c378" stroke-width="1"/><path d="M676 666h6M676 672h6M676 697h6M676 704h6M676 666q3 3 0 6M676 697q3 3.500 0 7" stroke="#74c378" stroke-width="1"/></g><path d="M680.500 449L686 441.500L900 459L907 462L910.300 470V563L913 563L927.500 549H928.500V705H727V690V453H692V541H680.500Z" fill="#c09055"/><path d="M680.500 449.500L683 446L690.500 452V540.500L686 541.200L680.500 539.500Z" fill="url(#lstrip)"/><path d="M690.500 457Q690.500 451.500 696 451.300L718 452.800V511Q718 516 715 519L693.500 540L690.500 540.500Z" fill="#f6b56b"/><path d="M725.300 408L926.700 426.400L900 459L686 441.500Z" fill="#a07742"/><path d="M725.300 408L734 408.800L696 442.300L686 441.500L681 447.500L680.500 449Z" fill="url(#lbev)"/><path d="M926.700 426.400Q936 428 938.800 441V528Q938.500 534 935.500 538L914 562.500L910.300 563V471Q909 463 900 459Z" fill="#f6b56b"/><path d="M926.700 426.400Q934 427.500 937.500 435L910.600 468Q908 462 900 459Z" fill="url(#bev)"/><path d="M901.500 551H910.300V563L905 562.500Q901.500 561 901.500 556Z" fill="url(#shd)"/><path d="M927.700 549.500V616M727.500 530V615" stroke="#000" stroke-width="1.300"/><path d="M929 549.500V617" stroke="#ff8c1a" stroke-width="1"/><path d="M916.400 562V573M916.400 567.200H922" stroke="#74c378" stroke-width="1" shape-rendering="crispEdges"/><path d="M705 596L718.500 596L693 621L683 618.500Q680.500 619 680.500 623L680.500 620Z" fill="url(#ltop)"/><path d="M680.500 622Q680.500 618.500 683 618.500L695 621V735L686 729Q680.500 722 680.500 712Z" fill="url(#ll)"/><path d="M692.500 621.500L718.500 596.500Q720.500 597 720.500 601V692H692.500Z" fill="#f6b56b"/><path d="M720.500 679L727 679.300L901 695.200V705L875 702.500L702 686L720.500 686Z" fill="url(#chan)"/><path d="M727 679.300L901 695.200" stroke="#ff8c1a" stroke-width="1.300" stroke-dasharray="7 3"/><path d="M866 700.500L901.500 703V739H882V712Z" fill="#a07742"/><path d="M928 616.400L938.500 616.400L913.300 642.300L903.500 640Z" fill="#a07742"/><path d="M913 643L938 617.300Q940.800 618 940.800 622V706Q940.500 709 938.500 711.500L905 746.500Q898 751.500 885.500 751.800L885.700 741Q896 741 901.500 736L911.500 690Z" fill="#f6b56b"/><path d="M901.500 644Q901.500 640 904 640L913.300 642.300V735L901.500 738Z" fill="url(#rl)"/><path d="M901.500 645H913.300V735L901.500 738Z" fill="url(#rl2)"/><path d="M719.500 685.500H728V691H719.500Z" fill="#a87c44"/><path d="M693.700 697Q693.700 686 704 686.200L873 702.300Q885 704 885.700 714L885.700 751.800L693.900 734.400Z" fill="url(#lip)"/><path d="M884.500 738.500Q894 740 902 736.500V748L897 750.300Q893 752 884.500 751.800Z" fill="#f6b56b"/></svg><div class="abs" style="left:764.9px;top:547.9px;width:34.200px;height:34.200px;border-radius:50%;background:conic-gradient(from -14deg at 60% 40%,#4a3010 0deg,#0a0500 14deg,#1a0e02 30deg,#7a5828 55deg,#b08248 80deg,#c89858 110deg,#e8b070 150deg,#dca060 172deg,#f8c480 185deg,#ffd088 230deg,#f8c078 270deg,#d8a260 300deg,#a87c44 330deg,#6a4a1c 350deg,#4a3010 360deg)"></div><div class="abs" style="left:778.9px;top:555.0px;width:13.200px;height:13.200px;border-radius:50%;background:#fff"></div><div class="abs" style="left:775.0px;top:564.7px;width:14px;height:1.200px;background:#000"></div><div class="abs" style="left:782.0px;top:558.7px;width:1.200px;height:13.200px;background:#000"></div><div class="abs" style="left:867.9px;top:557.9px;width:34.200px;height:34.200px;border-radius:50%;background:conic-gradient(from -14deg at 60% 40%,#4a3010 0deg,#0a0500 14deg,#1a0e02 30deg,#7a5828 55deg,#b08248 80deg,#c89858 110deg,#e8b070 150deg,#dca060 172deg,#f8c480 185deg,#ffd088 230deg,#f8c078 270deg,#d8a260 300deg,#a87c44 330deg,#6a4a1c 350deg,#4a3010 360deg)"></div><div class="abs" style="left:881.9px;top:565.0px;width:13.200px;height:13.200px;border-radius:50%;background:#fff"></div><div class="abs" style="left:878.0px;top:574.7px;width:14px;height:1.200px;background:#000"></div><div class="abs" style="left:885.0px;top:568.7px;width:1.200px;height:13.200px;background:#000"></div><div class="abs" style="left:765.1px;top:611.4px;width:34.200px;height:34.200px;border-radius:50%;background:conic-gradient(from -14deg at 60% 40%,#4a3010 0deg,#0a0500 14deg,#1a0e02 30deg,#7a5828 55deg,#b08248 80deg,#c89858 110deg,#e8b070 150deg,#dca060 172deg,#f8c480 185deg,#ffd088 230deg,#f8c078 270deg,#d8a260 300deg,#a87c44 330deg,#6a4a1c 350deg,#4a3010 360deg)"></div><div class="abs" style="left:779.1px;top:618.5px;width:13.200px;height:13.200px;border-radius:50%;background:#fff"></div><div class="abs" style="left:775.2px;top:628.2px;width:14px;height:1.200px;background:#000"></div><div class="abs" style="left:782.2px;top:622.2px;width:1.200px;height:13.200px;background:#000"></div><div class="abs" style="left:868.5px;top:620.9px;width:34.200px;height:34.200px;border-radius:50%;background:conic-gradient(from -14deg at 60% 40%,#4a3010 0deg,#0a0500 14deg,#1a0e02 30deg,#7a5828 55deg,#b08248 80deg,#c89858 110deg,#e8b070 150deg,#dca060 172deg,#f8c480 185deg,#ffd088 230deg,#f8c078 270deg,#d8a260 300deg,#a87c44 330deg,#6a4a1c 350deg,#4a3010 360deg)"></div><div class="abs" style="left:882.5px;top:628.0px;width:13.200px;height:13.200px;border-radius:50%;background:#fff"></div><div class="abs" style="left:878.6px;top:637.7px;width:14px;height:1.200px;background:#000"></div><div class="abs" style="left:885.6px;top:631.7px;width:1.200px;height:13.200px;background:#000"></div><div class="abs" style="left:1555px;top:233px;font-family:'Liberation Mono',monospace;font-size:16px;color:#0a8a0a;white-space:pre;line-height:21px;letter-spacing:-.05px;transform:scaleY(1.12);transform-origin:0 50%">FPS:   4.7</div><div class="abs" style="left:1555px;top:255px;font-family:'Liberation Mono',monospace;font-size:15.500px;color:#0a8a0a;white-space:pre;line-height:21px;letter-spacing:.05px">OpenGL ES2</div><div class="abs" style="left:1091px;top:198px;width:1px;height:15px;background:#30d030;z-index:3"></div><div class="abs" style="left:0;top:583px;width:15px;height:1px;background:#28c828"></div><div class="abs" style="left:0;top:215px;width:17px;height:686px;background:#555;border-right:2px solid #b0b0b0;border-left:1px solid #4a4a4a"></div><div class="abs" style="left:1px;top:215px;width:1px;height:686px;background:#858585"></div><div class="abs" style="left:14px;top:215px;width:1px;height:686px;background:#3c3c3c"></div><div class="abs" style="left:0;top:583px;width:15px;height:1px;background:#28c828"></div><div class="abs" style="left:1px;top:200px;width:14px;height:14px;background:#c8c8b8"></div><svg class="abs" style="left:0;top:199px" width="16" height="16" viewBox="0 0 16 16"><path d="M6.500 3v10.500M0 13.500h13M4 6l2.500-3L9 6M8 7h2v1.500H8zM12.500 11.500l1.500 2" stroke="#000" stroke-width="1.200" fill="none"/></svg>
<div id="vsb" class="abs"></div>
<div id="tabrow" class="abs"></div>
<div id="insp" class="abs"></div>
<div id="status" class="abs"></div>
<div class="abs" style="left:100px;top:921px;width:1035px;height:38px;background:#555"></div><div class="t" style="left:102.0px;top:923.1px;font-size:12.5px;letter-spacing:-0.87px;color:#f2f2f2;">Scale X</div><div class="fb" style="left:103px;width:90px">1</div><div class="abs" style="left:176px;top:938px;width:16px;height:10px;border:1px solid #1e1e1e;background:#555"></div><div class="abs" style="left:176px;top:947px;width:16px;height:10px;border:1px solid #1e1e1e;background:#555"></div><div class="abs" style="left:182px;top:941px;border:2px solid transparent;border-bottom:3px solid #222;border-top:none"></div><div class="abs" style="left:182px;top:951px;border:2px solid transparent;border-top:3px solid #222;border-bottom:none"></div><div class="t" style="left:196.0px;top:923.1px;font-size:12.5px;letter-spacing:-0.84px;color:#f2f2f2;">Scale Y</div><div class="fb" style="left:197px;width:90px">1</div><div class="abs" style="left:270px;top:938px;width:16px;height:10px;border:1px solid #1e1e1e;background:#555"></div><div class="abs" style="left:270px;top:947px;width:16px;height:10px;border:1px solid #1e1e1e;background:#555"></div><div class="abs" style="left:276px;top:941px;border:2px solid transparent;border-bottom:3px solid #222;border-top:none"></div><div class="abs" style="left:276px;top:951px;border:2px solid transparent;border-top:3px solid #222;border-bottom:none"></div><div class="t" style="left:290.0px;top:923.1px;font-size:12.5px;letter-spacing:-1.02px;color:#f2f2f2;">Size X</div><div class="fb" style="left:291px;width:90px">0 in</div><div class="t" style="left:384.0px;top:923.1px;font-size:12.5px;letter-spacing:-0.98px;color:#f2f2f2;">Size Y</div><div class="fb" style="left:385px;width:90px">0 in</div><div class="t" style="left:478.0px;top:923.1px;font-size:12.5px;letter-spacing:-0.87px;color:#f2f2f2;">Pos X</div><div class="fb" style="left:479px;width:90px">0 in</div><div class="t" style="left:572.0px;top:923.1px;font-size:12.5px;letter-spacing:-0.82px;color:#f2f2f2;">Pos Y</div><div class="fb" style="left:573px;width:90px">0 in</div><div class="t" style="left:666.0px;top:923.1px;font-size:12.5px;letter-spacing:-0.57px;color:#f2f2f2;">Delta X</div><div class="fb" style="left:667px;width:90px">0 in</div><div class="t" style="left:760.0px;top:923.1px;font-size:12.5px;letter-spacing:-0.54px;color:#f2f2f2;">Delta Y</div><div class="fb" style="left:761px;width:90px">0 in</div><div class="t" style="left:854.0px;top:923.1px;font-size:12.5px;letter-spacing:-0.48px;color:#f2f2f2;">Rot</div><div class="fb" style="left:855px;width:90px">0</div><div class="abs" style="left:928px;top:938px;width:16px;height:10px;border:1px solid #1e1e1e;background:#555"></div><div class="abs" style="left:928px;top:947px;width:16px;height:10px;border:1px solid #1e1e1e;background:#555"></div><div class="abs" style="left:934px;top:941px;border:2px solid transparent;border-bottom:3px solid #222;border-top:none"></div><div class="abs" style="left:934px;top:951px;border:2px solid transparent;border-top:3px solid #222;border-bottom:none"></div><div class="t" style="left:948.0px;top:923.1px;font-size:12.5px;letter-spacing:-0.45px;color:#f2f2f2;">Delta Distance</div><div class="fb" style="left:949px;width:90px">0 in</div><div class="t" style="left:1042.0px;top:923.1px;font-size:12.5px;letter-spacing:-0.27px;color:#f2f2f2;">Delta Angle</div><div class="fb" style="left:1043px;width:90px">0</div><div class="abs" style="left:1116px;top:938px;width:16px;height:10px;border:1px solid #1e1e1e;background:#555"></div><div class="abs" style="left:1116px;top:947px;width:16px;height:10px;border:1px solid #1e1e1e;background:#555"></div><div class="abs" style="left:1122px;top:941px;border:2px solid transparent;border-bottom:3px solid #222;border-top:none"></div><div class="abs" style="left:1122px;top:951px;border:2px solid transparent;border-top:3px solid #222;border-bottom:none"></div><div class="abs" style="left:6px;top:924px;width:2px;height:2px;background:#8a8a8a"></div><div class="abs" style="left:6px;top:928px;width:2px;height:2px;background:#8a8a8a"></div><div class="abs" style="left:6px;top:932px;width:2px;height:2px;background:#8a8a8a"></div><div class="abs" style="left:6px;top:936px;width:2px;height:2px;background:#8a8a8a"></div><div class="abs" style="left:6px;top:940px;width:2px;height:2px;background:#8a8a8a"></div><div class="abs" style="left:6px;top:944px;width:2px;height:2px;background:#8a8a8a"></div><div class="abs" style="left:6px;top:948px;width:2px;height:2px;background:#8a8a8a"></div><div class="abs" style="left:6px;top:952px;width:2px;height:2px;background:#8a8a8a"></div><div class="abs" style="left:97px;top:926px;width:2px;height:29px;background:linear-gradient(90deg,#2e2e2e 50%,#6e6e6e 50%)"></div><div class="abs" style="left:1136px;top:926px;width:2px;height:29px;background:linear-gradient(90deg,#2e2e2e 50%,#6e6e6e 50%)"></div><div class="abs" style="left:1227px;top:926px;width:2px;height:29px;background:linear-gradient(90deg,#2e2e2e 50%,#6e6e6e 50%)"></div><div class="abs" style="left:1345px;top:926px;width:2px;height:29px;background:linear-gradient(90deg,#2e2e2e 50%,#6e6e6e 50%)"></div><div class="abs" style="left:1231px;top:927px;width:26px;height:26px;background:#5b78a8"></div><div class="t" style="left:8.0px;top:964.5px;font-size:12.5px;letter-spacing:-0.38px;color:#fff;">Select object(s)</div><div class="t" style="left:1213.0px;top:968.2px;font-size:12.5px;letter-spacing:-1.26px;color:#f0f0f0;">SNAP</div><div class="t" style="left:1251.0px;top:968.2px;font-size:12.5px;letter-spacing:-1.59px;color:#f0f0f0;">GEO</div><div class="abs" style="left:1300px;top:965px;width:72px;height:19px;background:#282828;border:1px solid #8c8c8c"></div><div class="t" style="left:1305.0px;top:968.2px;font-size:12.5px;letter-spacing:-0.56px;color:#fff;">10.19 in</div><div class="abs" style="left:1290px;top:966px;width:7px;height:7px;border:1px solid #e0e0e0"></div><div class="t" style="left:1292px;top:975px;font-size:8px;color:#bbb">X</div><div class="abs" style="left:1392px;top:965px;width:72px;height:19px;background:#282828;border:1px solid #8c8c8c"></div><div class="t" style="left:1397.0px;top:968.2px;font-size:12.5px;letter-spacing:-0.51px;color:#fff;">4.31 in</div><div class="abs" style="left:1382px;top:966px;width:7px;height:7px;border:1px solid #e0e0e0"></div><div class="t" style="left:1384px;top:975px;font-size:8px;color:#bbb">Y</div><div class="abs" style="left:1484px;top:965px;width:72px;height:19px;background:#282828;border:1px solid #8c8c8c"></div><div class="t" style="left:1489.0px;top:968.2px;font-size:12.5px;letter-spacing:-0.29px;color:#fff;">0 in</div><div class="abs" style="left:1474px;top:966px;width:7px;height:7px;border:1px solid #e0e0e0"></div><div class="t" style="left:1476px;top:975px;font-size:8px;color:#bbb">Z</div><div class="t" style="left:1567.0px;top:964.9px;font-size:12.5px;letter-spacing:-1.34px;color:#f0f0f0;">58%</div><div class="t" style="left:1623.0px;top:964.9px;font-size:12.5px;letter-spacing:-0.49px;color:#f0f0f0;">11:31 AM</div><div class="abs" style="left:0;top:901px;width:16px;height:18px;background:#4a4a4a"></div>
<div class="abs" style="left:16px;top:901px;width:167px;height:18px;background:#4e4e4e"></div>
<div class="abs" style="left:22px;top:901px;width:65px;height:17px;background:#666;border:1px solid #2a2a2a;border-top:none;border-radius:0 0 4px 4px"></div>
<div class="abs" style="left:88px;top:902px;width:68px;height:15px;background:#555;border:1px solid #4a4a4a;border-top:none;border-radius:0 0 3px 3px"></div>
<div class="abs" style="left:183px;top:902px;width:3px;height:17px;background:#f4f4f4"></div>
<div class="abs" style="left:186px;top:902px;width:17px;height:17px;background:#555;border:1px solid #444"></div>
<div class="abs" style="left:191px;top:907px;border:3.5px solid transparent;border-right:4px solid #fff;border-left:none"></div>
<div class="abs" style="left:203px;top:902px;width:1443px;height:17px;background:linear-gradient(90deg,#5a5a5a,#727272 45%,#6e6e6e)"></div>
<div class="abs" style="left:851px;top:902px;width:227px;height:17px;background:#555;border:1px solid #333"></div>
<div class="abs" style="left:1646px;top:902px;width:17px;height:17px;background:#555;border:1px solid #444"></div>
<div class="abs" style="left:1652px;top:907px;border:3.5px solid transparent;border-left:4px solid #fff;border-right:none"></div>
<div class="abs" style="left:1663px;top:901px;width:17px;height:18px;background:#4e4e4e"></div>
<div class="abs" style="left:16px;top:900px;width:1647px;height:2px;background:#e8e8e8"></div><div class="t" style="left:43.0px;top:902.8px;font-size:12.5px;letter-spacing:-0.21px;color:#fff;">Model</div><div class="t" style="left:109.0px;top:903.5px;font-size:12.5px;letter-spacing:-0.68px;color:#b8b8b8;clip-path:inset(0 0 4px 0);">Paper 1</div><div class="abs" style="left:1662px;top:215px;width:1px;height:686px;background:#c4c4c4"></div><div class="abs" style="left:1663px;top:214px;width:17px;height:16px;background:#555;border:1px solid #444"></div>
<div class="abs" style="left:1668px;top:219px;border:3.5px solid transparent;border-bottom:4px solid #fff;border-top:none"></div>
<div class="abs" style="left:1663px;top:479px;width:17px;height:99px;background:#555;border:1px solid #444"></div>
<div class="abs" style="left:1663px;top:885px;width:17px;height:16px;background:#555;border:1px solid #444"></div>
<div class="abs" style="left:1668px;top:891px;border:3.5px solid transparent;border-top:4px solid #fff;border-bottom:none"></div><svg class="abs" style="left:0;top:901px" width="1680" height="85" viewBox="0 901 1680 85" fill="none"><defs><filter id="sh3" x="-20%" y="-20%" width="150%" height="150%"><feDropShadow dx="0.7" dy="0.7" stdDeviation="0.5" flood-color="#000" flood-opacity="0.5"/></filter></defs><g filter="url(#sh3)"><rect x="27.500" y="904.500" width="8" height="6" rx="1" fill="#ddd" stroke="#222" stroke-width="1"/><circle cx="33.500" cy="911.500" r="3.600" fill="#e8e8e8" stroke="#222" stroke-width="1.200"/><circle cx="34.500" cy="912.300" r="1.600" fill="#999"/><path d="M94.500 903.500H100.500L103.500 906.500V914.500H94.500Z" fill="#fff" stroke="#222" stroke-width="1"/><text x="96.800" y="913" font-family="Liberation Sans" font-weight="bold" font-size="8" fill="#1a1a9a">1</text><path d="M16.500 934V944Q16.500 948 20.500 948H30" stroke="#f02010" stroke-width="1.600"/><rect x="14.800" y="940" width="3.400" height="3.400" fill="#f02010"/><rect x="21" y="946.300" width="3.400" height="3.400" fill="#f02010"/><path d="M20.500 935L33 947" stroke="#bbb" stroke-width="1.200"/><path d="M20.500 935L25 939.300" stroke="#e8e020" stroke-width="1.600"/><path d="M25.5 931.5l.7 1.300l1.300.7l-1.300.7l-.7 1.300l-.7-1.300l-1.300-.7l1.300-.7z" fill="#ffffd0"/><path d="M30 929.5l.7 1.300l1.300.7l-1.300.7l-.7 1.300l-.7-1.300l-1.300-.7l1.300-.7z" fill="#ffffd0"/><path d="M29 935l.7 1.300l1.300.7l-1.300.7l-.7 1.300l-.7-1.300l-1.300-.7l1.300-.7z" fill="#ffffd0"/><path d="M33.5 936l.7 1.300l1.300.7l-1.300.7l-.7 1.300l-.7-1.300l-1.300-.7l1.300-.7z" fill="#ffffd0"/><path d="M44 932L60 948M60 932L44 948" stroke="#8e8e8e" stroke-width="2.600"/><rect x="70.5" y="931.5" width="19" height="17" stroke="#a4a4a4" stroke-width="1.200"/><rect x="71" y="932" width="18" height="3.400" fill="#a4a4a4"/><rect x="72.5" y="936.8" width="4.200" height="1.500" fill="#a4a4a4"/><rect x="77.8" y="936.8" width="4.200" height="1.500" fill="#a4a4a4"/><rect x="83.1" y="936.8" width="4.200" height="1.500" fill="#a4a4a4"/><rect x="72.5" y="939.6999999999999" width="4.200" height="1.500" fill="#a4a4a4"/><rect x="77.8" y="939.6999999999999" width="4.200" height="1.500" fill="#a4a4a4"/><rect x="83.1" y="939.6999999999999" width="4.200" height="1.500" fill="#a4a4a4"/><rect x="72.5" y="942.5999999999999" width="4.200" height="1.500" fill="#a4a4a4"/><rect x="77.8" y="942.5999999999999" width="4.200" height="1.500" fill="#a4a4a4"/><rect x="83.1" y="942.5999999999999" width="4.200" height="1.500" fill="#a4a4a4"/><rect x="72.5" y="945.5" width="4.200" height="1.500" fill="#a4a4a4"/><rect x="77.8" y="945.5" width="4.200" height="1.500" fill="#a4a4a4"/><rect x="83.1" y="945.5" width="4.200" height="1.500" fill="#a4a4a4"/><rect x="73.5" y="932.6" width="1" height="1.400" fill="#4a4a4a"/><rect x="77.7" y="932.6" width="1" height="1.400" fill="#4a4a4a"/><rect x="81.9" y="932.6" width="1" height="1.400" fill="#4a4a4a"/><rect x="86.1" y="932.6" width="1" height="1.400" fill="#4a4a4a"/><path d="M1148 938L1154.500 932.500H1163V938L1156 940.500Z" stroke="#fff" stroke-width="1.200"/><path d="M1151 937.500L1155 934.500L1157 936L1160 934" stroke="#ccc" stroke-width=".8"/><rect x="1145.500" y="941" width="6.500" height="6.500" stroke="#fff" stroke-width="1.300"/><rect x="1173.500" y="932.500" width="6" height="6" stroke="#fff" stroke-width="1.200"/><path d="M1174 946L1187.500 933" stroke="#bbb" stroke-width="1"/><path d="M1180.500 941.500H1188V948H1180.500ZM1180.500 941.500L1183.500 938.500H1191V945L1188 948M1188 941.500L1191 938.500" stroke="#fff" stroke-width="1.100"/><path d="M1203 945C1203 940 1206 939 1209 939S1215.500 938 1215.500 933" stroke="#ddd" stroke-width="1.100"/><circle cx="1209.300" cy="938.800" r="2" fill="#5aa0f0"/><path d="M1211 940.500L1216.500 942.500L1214.500 943.500L1217 946.500L1215.800 947.300L1213.500 944.500L1212.300 946.300Z" fill="#fff"/><rect x="1236.500" y="933" width="15" height="13.500" fill="#fff"/><path d="M1237.500 934L1250.500 945.500H1237.500Z" fill="#0a8080"/><path d="M1238.500 934H1250.500V944.500Z" fill="#08e808"/><path d="M1237 933.500H1251" stroke="#333" stroke-width="1" stroke-dasharray="1 1"/><path d="M1251 934V946" stroke="#333" stroke-width="1" stroke-dasharray="1 1"/><path d="M1264.500 934.500L1278.500 947.500H1264.500Z" fill="#0a8080" stroke="#fff" stroke-width="1.300"/><text x="1271" y="940" font-family="Liberation Sans" font-weight="bold" font-size="6.500" fill="#fff" letter-spacing="-.4">WP</text><path d="M1293.500 934L1307.500 947.500H1293.500Z" fill="#08e808" stroke="#fff" stroke-width="1.300" stroke-dasharray="1.500 1"/><path d="M1293.500 934L1307.500 947.500" stroke="#fff" stroke-width="1.600"/><text x="1300.500" y="939.500" font-family="Liberation Sans" font-weight="bold" font-size="6.500" fill="#fff" letter-spacing="-.3">CP</text><path d="M1330 936.500H1322.700V941.500H1327.700V945.500H1334" stroke="#fff" stroke-width="3.800"/><path d="M1330 936.500H1322.700V941.500H1327.700V945.500H1334" stroke="#08c808" stroke-width="1.700" stroke-dasharray="2 1"/><text x="1331.300" y="938.700" font-family="Liberation Sans" font-weight="bold" font-size="6.500" fill="#fff">F</text></g><g><path d="M1355 934V940.500H1361.500Z" fill="#8e8e8e"/><path d="M1358 936A5 5 0 1 1 1364 945" stroke="#8e8e8e" stroke-width="2"/><path d="M1364 939V947L1366 945.300L1367.500 948.500L1368.800 947.800L1367.300 944.800L1369.500 944.500Z" fill="#8e8e8e" stroke="#777" stroke-width=".5"/><path d="M1385 934H1391L1390 939.500Z" fill="#f01010"/><path d="M1396 941V947H1391Z" fill="#5aa0f0"/><path d="M1389.500 941L1392 944" stroke="#8e8e8e" stroke-width="1.500"/><path d="M1381.7 932.2l2.600 2.600m0-2.600l-2.600 2.600" stroke="#e8e040" stroke-width=".9"/><path d="M1388.7 932.2l2.600 2.600m0-2.600l-2.600 2.600" stroke="#e8e040" stroke-width=".9"/><path d="M1394.2 937.2l2.600 2.600m0-2.600l-2.600 2.600" stroke="#e8e040" stroke-width=".9"/><path d="M1387.7 944.7l2.600 2.600m0-2.600l-2.600 2.600" stroke="#e8e040" stroke-width=".9"/><path d="M1395.2 945.7l2.600 2.600m0-2.600l-2.600 2.600" stroke="#e8e040" stroke-width=".9"/><path d="M1388.7 938.7l2.600 2.600m0-2.600l-2.600 2.600" stroke="#e8e040" stroke-width=".9"/><path d="M1411.500 943.500L1416 934.500L1420.500 943.500Z" stroke="#fff" stroke-width="1.300"/><path d="M1416.500 946.500L1420.800 938L1425 946.500Z" stroke="#f01010" stroke-width="1.500"/><path d="M1439 946.500V942L1442 938.500H1452L1455 942V946.500Z" stroke="#8e8e8e" stroke-width="1.200"/><rect x="1443.500" y="933" width="7" height="5" stroke="#8e8e8e" stroke-width="1.100"/><path d="M1445 935.500H1449" stroke="#8e8e8e" stroke-width="1"/><path d="M1439 942.500H1455M1444 942.500L1447 945L1450 942.500" stroke="#8e8e8e" stroke-width="1"/><rect x="1465" y="932.5" width="16" height="15" stroke="#fff" stroke-width="1.400"/><rect x="1463.4" y="930.9" width="3.200" height="3.200" fill="#ddd"/><rect x="1479.4" y="930.9" width="3.200" height="3.200" fill="#ddd"/><rect x="1463.4" y="945.9" width="3.200" height="3.200" fill="#ddd"/><rect x="1479.4" y="945.9" width="3.200" height="3.200" fill="#ddd"/><rect x="1467" y="938.500" width="8" height="7" stroke="#fff" stroke-width="1.100"/><rect x="1465.500" y="937" width="3.200" height="3.200" fill="#5aa0f0"/><rect x="1473.500" y="945" width="3.200" height="3.200" fill="#5aa0f0"/><path d="M1466 947L1481 932.500" stroke="#f01010" stroke-width="1.500"/><rect x="1493" y="932.5" width="16" height="15" stroke="#8e8e8e" stroke-width="1.400"/><rect x="1491.4" y="930.9" width="3.200" height="3.200" fill="#8e8e8e"/><rect x="1507.4" y="930.9" width="3.200" height="3.200" fill="#8e8e8e"/><rect x="1491.4" y="945.9" width="3.200" height="3.200" fill="#8e8e8e"/><rect x="1507.4" y="945.9" width="3.200" height="3.200" fill="#8e8e8e"/><circle cx="1501" cy="940" r="2.300" fill="#8e8e8e"/><path d="M1501 934V946M1495 940H1507" stroke="#8e8e8e" stroke-width="1.200"/><path d="M1501 933.500l-2 2.500h4zM1501 946.500l-2-2.500h4zM1494.500 940l2.500-2v4zM1507.500 940l-2.500-2v4z" fill="#8e8e8e"/><rect x="1522.500" y="937.500" width="11" height="9.500" stroke="#8e8e8e" stroke-width="1.300"/><rect x="1526.500" y="940.500" width="3" height="3" fill="#8e8e8e"/><path d="M1528 940C1528 935 1532 933.500 1536 933.500" stroke="#8e8e8e" stroke-width="1.200"/><rect x="1535" y="932" width="3.200" height="3.200" fill="#8e8e8e"/><rect x="1521.0" y="936.0" width="3" height="3" fill="#8e8e8e"/><rect x="1532.0" y="936.0" width="3" height="3" fill="#8e8e8e"/><rect x="1521.0" y="945.5" width="3" height="3" fill="#8e8e8e"/><rect x="1532.0" y="945.5" width="3" height="3" fill="#8e8e8e"/><rect x="1550.500" y="937.500" width="11" height="9.500" stroke="#8e8e8e" stroke-width="1.300"/><path d="M1553 944L1564 934" stroke="#8e8e8e" stroke-width="1.200"/><rect x="1554" y="941" width="4" height="3" fill="#8e8e8e"/><path d="M1564 932V943M1562 936H1566M1562 940H1566" stroke="#8e8e8e" stroke-width="1"/><rect x="1549.0" y="936.0" width="3" height="3" fill="#8e8e8e"/><rect x="1560.0" y="936.0" width="3" height="3" fill="#8e8e8e"/><rect x="1549.0" y="945.5" width="3" height="3" fill="#8e8e8e"/><rect x="1560.0" y="945.5" width="3" height="3" fill="#8e8e8e"/><path d="M1578.500 939V946.500H1592.500V933.500" stroke="#fff" stroke-width="1.600"/><path d="M1578.500 939L1592.500 933.500" stroke="#f01010" stroke-width="1.600"/><rect x="1576.5" y="937" width="4" height="4" fill="#5aa0f0"/><rect x="1576.5" y="944.5" width="4" height="4" fill="#5aa0f0"/><rect x="1590.5" y="944.5" width="4" height="4" fill="#5aa0f0"/><rect x="1590.5" y="931.5" width="4" height="4" fill="#5aa0f0"/><rect x="1605" y="932.5" width="16" height="15" stroke="#8e8e8e" stroke-width="1.400"/><rect x="1603.4" y="930.9" width="3.200" height="3.200" fill="#8e8e8e"/><rect x="1619.4" y="930.9" width="3.200" height="3.200" fill="#8e8e8e"/><rect x="1603.4" y="945.9" width="3.200" height="3.200" fill="#8e8e8e"/><rect x="1619.4" y="945.9" width="3.200" height="3.200" fill="#8e8e8e"/><rect x="1608" y="936" width="10" height="8.500" stroke="#ccc" stroke-width="1.100"/><path d="M1606 947L1621 932.500" stroke="#f01010" stroke-width="1.500"/><rect x="1606.4" y="934.4" width="3.200" height="3.200" fill="#5aa0f0"/><rect x="1616.4" y="934.4" width="3.200" height="3.200" fill="#5aa0f0"/><rect x="1606.4" y="942.9" width="3.200" height="3.200" fill="#5aa0f0"/><rect x="1616.4" y="942.9" width="3.200" height="3.200" fill="#5aa0f0"/></g></svg>
</body></html>
